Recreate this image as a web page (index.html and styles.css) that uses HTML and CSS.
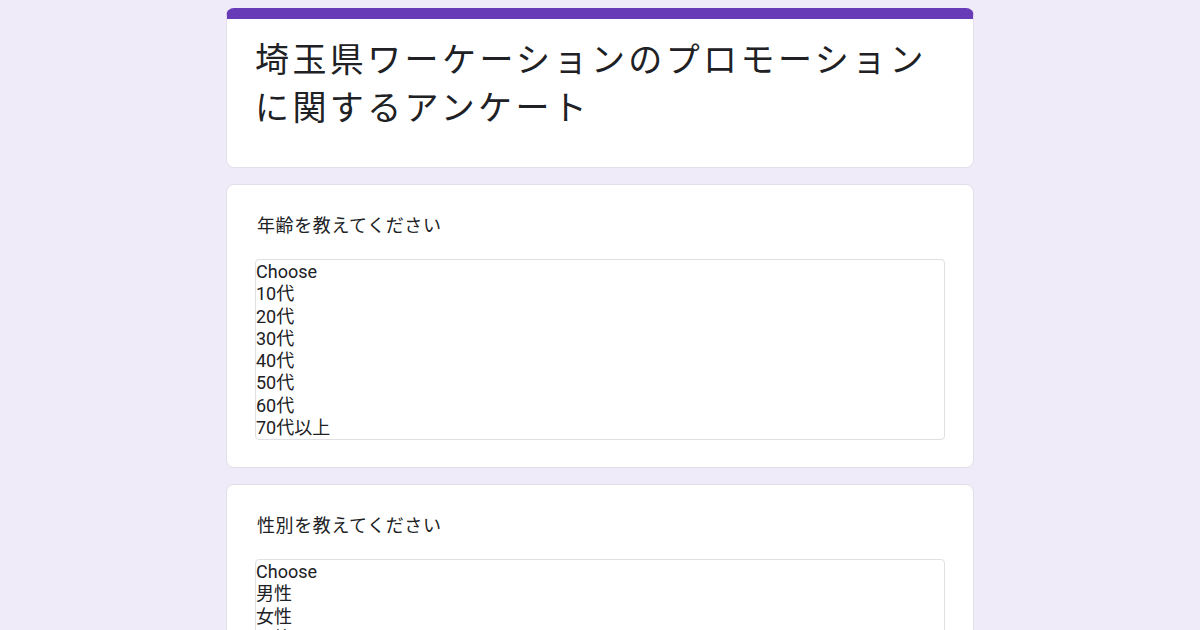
FILE: index.html
```html
<!DOCTYPE html>
<html lang="ja">
<head>
  <meta charset="UTF-8">
  <title>埼玉県ワーケーションのプロモーションに関するアンケート</title>
  <link rel="stylesheet" href="styles.css">
</head>
<body>
  <div class="form">
    <div class="card title-card">
      <h1 class="form-title">埼玉県ワーケーションのプロモーションに関するアンケート</h1>
    </div>

    <div class="card question">
      <div class="question-label" id="age-label">年齢を教えてください</div>
      <div class="choice-list" role="listbox" aria-labelledby="age-label">
        <div class="choice" role="option">Choose</div>
        <div class="choice" role="option">10代</div>
        <div class="choice" role="option">20代</div>
        <div class="choice" role="option">30代</div>
        <div class="choice" role="option">40代</div>
        <div class="choice" role="option">50代</div>
        <div class="choice" role="option">60代</div>
        <div class="choice" role="option">70代以上</div>
      </div>
    </div>

    <div class="card question">
      <div class="question-label" id="gender-label">性別を教えてください</div>
      <div class="choice-list" role="listbox" aria-labelledby="gender-label">
        <div class="choice" role="option">Choose</div>
        <div class="choice" role="option">男性</div>
        <div class="choice" role="option">女性</div>
        <div class="choice" role="option">回答しない</div>
      </div>
    </div>
  </div>
</body>
</html>
```

FILE: styles.css
```css
body {
  background-color: #f0ebf8;
  color: #202124;
  font-family: Roboto, "Noto Sans CJK JP", sans-serif;
  margin: 0;
  padding: 8px 0 0;
}

.form {
  width: 748px;
  margin: 0 auto;
  display: flex;
  flex-direction: column;
  gap: 16px;
}

.card {
  background: #fff;
  border: 1px solid #e3dfea;
  border-radius: 8px;
  padding: 27px 28px;
}

.title-card {
  border-top: 11px solid #673ab7;
  padding: 15px 28px 37px;
}

.form-title {
  font-family: "Noto Sans CJK JP", sans-serif;
  font-size: 34px;
  font-weight: 400;
  letter-spacing: 3.4px;
  line-height: 48px;
  margin: 0;
}

.question {
  display: flex;
  flex-direction: column;
}

.question-label {
  font-family: "Noto Sans CJK JP", sans-serif;
  font-size: 18px;
  letter-spacing: 0.6px;
  line-height: 24px;
  padding-left: 2px;
  margin-bottom: 23px;
}

.choice-list {
  height: 181px;
  box-sizing: border-box;
  border: 1px solid #e0dfe3;
  border-radius: 4px;
  padding-top: 1px;
  overflow: hidden;
}

.choice {
  font-size: 18px;
  line-height: 22.3px;
  height: 22.3px;
  white-space: nowrap;
}
```
